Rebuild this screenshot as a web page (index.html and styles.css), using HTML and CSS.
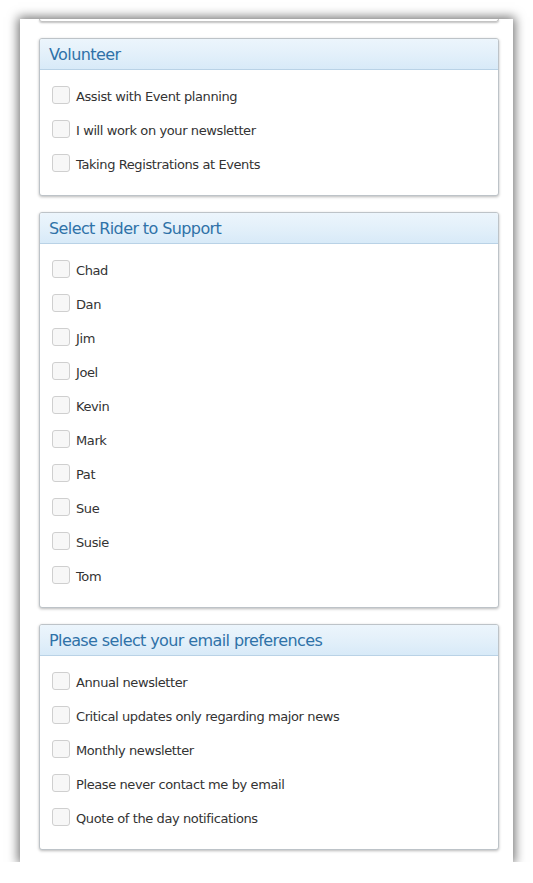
FILE: index.html
```html
<!DOCTYPE html>
<html>
<head>
<meta charset="utf-8">
<link rel="stylesheet" href="styles.css">
</head>
<body>
<div class="sheet">
  <div class="prev-panel"></div>

  <section class="panel">
    <h2 class="panel-title">Volunteer</h2>
    <div class="panel-body">
      <label class="opt"><span class="box"></span><span class="lbl">Assist with Event planning</span></label>
      <label class="opt"><span class="box"></span><span class="lbl">I will work on your newsletter</span></label>
      <label class="opt"><span class="box"></span><span class="lbl">Taking Registrations at Events</span></label>
    </div>
  </section>

  <section class="panel">
    <h2 class="panel-title">Select Rider to Support</h2>
    <div class="panel-body">
      <label class="opt"><span class="box"></span><span class="lbl">Chad</span></label>
      <label class="opt"><span class="box"></span><span class="lbl">Dan</span></label>
      <label class="opt"><span class="box"></span><span class="lbl">Jim</span></label>
      <label class="opt"><span class="box"></span><span class="lbl">Joel</span></label>
      <label class="opt"><span class="box"></span><span class="lbl">Kevin</span></label>
      <label class="opt"><span class="box"></span><span class="lbl">Mark</span></label>
      <label class="opt"><span class="box"></span><span class="lbl">Pat</span></label>
      <label class="opt"><span class="box"></span><span class="lbl">Sue</span></label>
      <label class="opt"><span class="box"></span><span class="lbl">Susie</span></label>
      <label class="opt"><span class="box"></span><span class="lbl">Tom</span></label>
    </div>
  </section>

  <section class="panel">
    <h2 class="panel-title">Please select your email preferences</h2>
    <div class="panel-body">
      <label class="opt"><span class="box"></span><span class="lbl">Annual newsletter</span></label>
      <label class="opt"><span class="box"></span><span class="lbl">Critical updates only regarding major news</span></label>
      <label class="opt"><span class="box"></span><span class="lbl">Monthly newsletter</span></label>
      <label class="opt"><span class="box"></span><span class="lbl">Please never contact me by email</span></label>
      <label class="opt"><span class="box"></span><span class="lbl">Quote of the day notifications</span></label>
    </div>
  </section>
</div>
</body>
</html>
```

FILE: styles.css
```css
html, body {
  margin: 0;
  padding: 0;
  background: #ffffff;
}

body {
  padding: 19px 20px 0 20px;
  font-family: "DejaVu Sans", Verdana, sans-serif;
}

.sheet {
  width: 493px;
  background: #ffffff;
  box-shadow: 0 0 10px 2px rgba(0, 0, 0, 0.55);
  padding: 0 0 12px 0;
  box-sizing: border-box;
}

.prev-panel {
  margin: 0 14px 0 19px;
  height: 2px;
  border: 1px solid #c4c4c4;
  border-top: none;
  border-radius: 0 0 4px 4px;
  box-shadow: 0 1px 2px rgba(0, 0, 0, 0.25);
}

.panel {
  margin: 16px 14px 0 19px;
  border: 1px solid #bdc3c8;
  border-radius: 3px;
  box-shadow: 0 1px 3px rgba(0, 0, 0, 0.28);
  background: #fff;
}

.panel-title {
  margin: 0;
  height: 30px;
  line-height: 31px;
  padding: 0 9px;
  font-size: 16px;
  letter-spacing: -0.6px;
  font-weight: normal;
  color: #2f72a8;
  background: linear-gradient(to bottom, #ecf5fc 0%, #e3f0fa 50%, #d8eaf8 100%);
  border-bottom: 1px solid #b9d2e6;
  border-radius: 2px 2px 0 0;
}

.panel-body {
  display: flex;
  flex-direction: column;
  gap: 16px;
  padding: 16px 12px 23px 12px;
}

.opt {
  display: flex;
  align-items: center;
  gap: 6px;
  height: 18px;
}

.box {
  width: 16px;
  height: 16px;
  border: 1px solid #cfcfcf;
  border-radius: 3px;
  background: #f7f7f7;
  flex: none;
}

.lbl {
  font-size: 13px;
  letter-spacing: -0.4px;
  color: #333333;
  position: relative;
  top: 1px;
}
```
